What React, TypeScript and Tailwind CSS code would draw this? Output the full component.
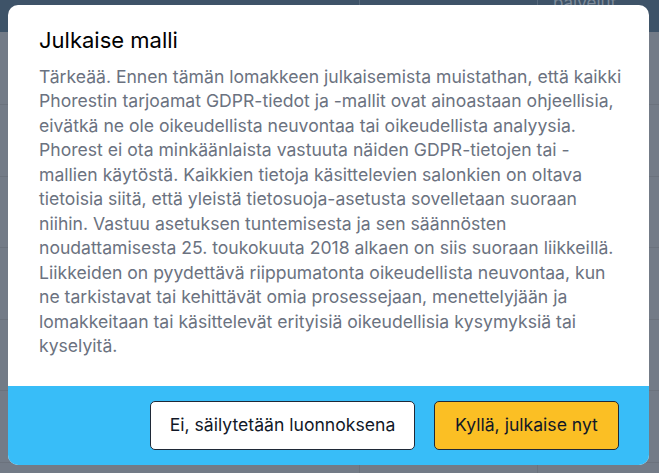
import React from "react";

export default function App() {
  const rows = [0, 1, 2, 3, 4, 5];
  return (
    <div className="relative w-[659px] h-[473px] overflow-hidden bg-[#737b87]" style={{ fontFamily: "Inter, 'Noto Sans', sans-serif" }}>
      {/* background page (dimmed) */}
      <div className="flex flex-col w-full h-full">
        <div className="h-[32px] bg-[#3e5368] flex shrink-0">
          <div className="w-[360px] border-r border-[#56687b]" />
          <div className="w-[178px] border-r border-[#56687b]" />
          <div className="flex-1 relative">
            <span className="absolute left-[15px] top-[-9px] text-[17px] text-[#7d8a99]">palvelut</span>
          </div>
        </div>
        <div className="flex-1 flex flex-col">
          <div className="h-[73px] border-b border-[#6b727d]" />
          {rows.map((r) => (
            <div key={r} className="h-[71.5px] border-b border-[#6b727d] shrink-0 flex">
              <div className="w-[360px] border-r border-[#6b727d]" />
              <div className="w-[178px] border-r border-[#6b727d]" />
            </div>
          ))}
        </div>
      </div>

      {/* modal */}
      <div className="absolute left-[8px] top-[5px] w-[641px] h-[460px] bg-white rounded-[10px] overflow-hidden flex flex-col">
        <div className="flex-1 pl-[31px] pr-[25px] pt-[21px]">
          <h2 className="text-[22px] leading-[28px] text-black font-normal">Julkaise malli</h2>
          <p className="mt-[11px] text-[17.6px] leading-[24.45px] text-[#6b7280]">
            Tärkeää. Ennen tämän lomakkeen julkaisemista muistathan, että kaikki Phorestin tarjoamat GDPR-tiedot ja -mallit ovat ainoastaan ohjeellisia, eivätkä ne ole oikeudellista neuvontaa tai oikeudellista analyysia. Phorest ei ota minkäänlaista vastuuta näiden GDPR-tietojen tai -mallien käytöstä. Kaikkien tietoja käsittelevien salonkien on oltava tietoisia siitä, että yleistä tietosuoja-asetusta sovelletaan suoraan niihin. Vastuu asetuksen tuntemisesta ja sen säännösten noudattamisesta 25. toukokuuta 2018 alkaen on siis suoraan liikkeillä. Liikkeiden on pyydettävä riippumatonta oikeudellista neuvontaa, kun ne tarkistavat tai kehittävät omia prosessejaan, menettelyjään ja lomakkeitaan tai käsittelevät erityisiä oikeudellisia kysymyksiä tai kyselyitä.
          </p>
        </div>
        <div className="h-[79px] bg-[#38bdf8] flex items-center justify-end gap-[19px] pr-[30px]">
          <button className="h-[49px] w-[265px] bg-white border border-[#1f2937] rounded-[5px] text-[17.6px] text-[#111827]">
            Ei, säilytetään luonnoksena
          </button>
          <button className="h-[49px] w-[185px] bg-[#fbbf24] border border-[#1f2937] rounded-[5px] text-[17.6px] text-[#111827]">
            Kyllä, julkaise nyt
          </button>
        </div>
      </div>
    </div>
  );
}
